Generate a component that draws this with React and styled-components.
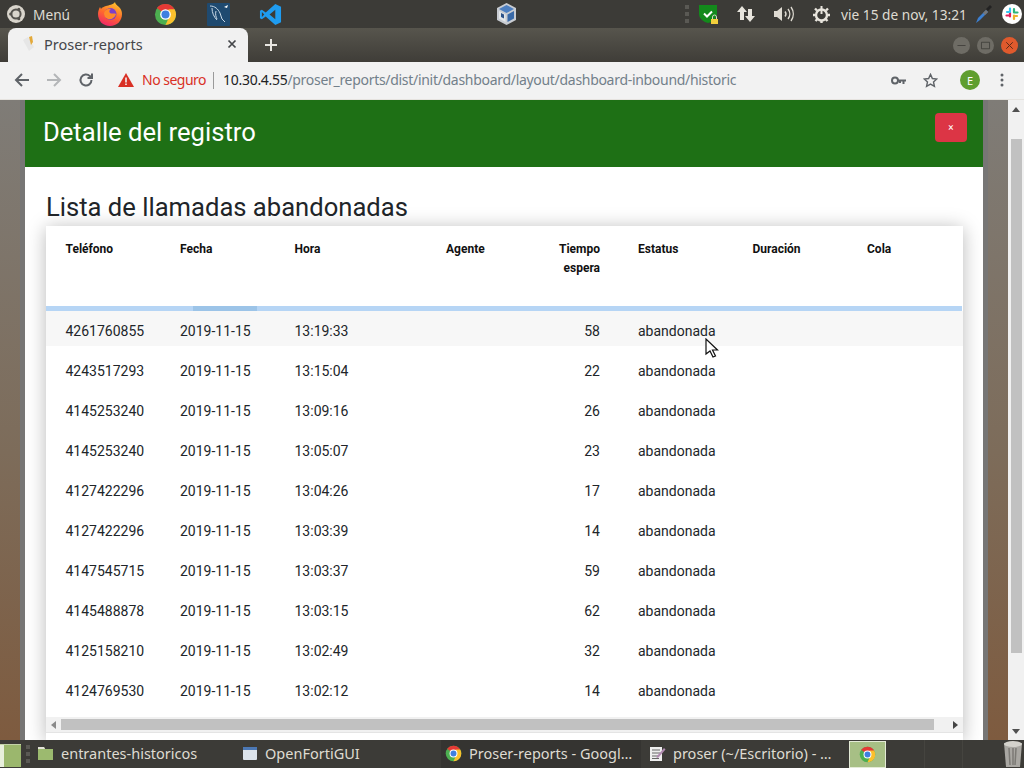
import React from "react";
import styled, { createGlobalStyle } from "styled-components";

const GlobalStyle = createGlobalStyle`
  html, body {
    margin: 0;
    padding: 0;
    overflow: hidden;
    background: #3c3b37;
  }
`;

const Screen = styled.div`
  position: relative;
  width: 1024px;
  height: 768px;
  display: flex;
  flex-direction: column;
  overflow: hidden;
  font-family: "Noto Sans", sans-serif;
`;

/* ---------- ubuntu top panel ---------- */
const TopPanel = styled.div`
  height: 28px;
  flex: none;
  display: flex;
  align-items: center;
  background: #3c3b37;
  color: #dfdbd2;
  font-size: 13.7px;
`;

const PanelSlot = styled.div`
  display: flex;
  align-items: center;
  flex: none;
  margin-left: ${(props) => props.$ml || 0}px;
`;

const PanelHandle = styled.div`
  width: 4px;
  height: 18px;
  flex: none;
  margin-left: ${(props) => props.$ml || 0}px;
  background: repeating-linear-gradient(#5a5954 0 4px, transparent 4px 7px);
`;

/* ---------- chrome tabs ---------- */
const TabStrip = styled.div`
  height: 34px;
  flex: none;
  display: flex;
  align-items: flex-end;
  padding-left: 8px;
  background: linear-gradient(#57554d, #3f3d38);
`;

const Tab = styled.div`
  width: 240px;
  height: 34px;
  box-sizing: border-box;
  display: flex;
  align-items: center;
  padding: 0 9px 2px 14px;
  background: #f1f1f1;
  border-radius: 8px 8px 0 0;
  color: #45474a;
  font-size: 14.5px;
`;

const TabTitle = styled.span`
  flex: 1;
  margin-left: 8px;
`;

const NewTab = styled.div`
  display: flex;
  margin-left: 15px;
  align-self: center;
`;

const WindowButtons = styled.div`
  display: flex;
  align-self: center;
  gap: 7px;
  margin-left: auto;
  margin-right: 6px;
`;

const WindowButton = styled.div`
  width: 17px;
  height: 17px;
  display: flex;
  align-items: center;
  justify-content: center;
  border-radius: 50%;
  background: ${(props) => (props.$close ? "#df5a2d" : "#6e6c65")};
`;

/* ---------- chrome toolbar ---------- */
const Toolbar = styled.div`
  height: 38px;
  flex: none;
  box-sizing: border-box;
  display: flex;
  align-items: center;
  padding-bottom: 1px;
  background: #f2f2f2;
  border-bottom: 1px solid #e6e3df;
`;

const ToolSlot = styled.div`
  display: flex;
  align-items: center;
  flex: none;
  margin-left: ${(props) => props.$ml || 0}px;
`;

const NotSecure = styled.span`
  margin: 0 0 2px 8px;
  color: #d93025;
  font-size: 14px;
  letter-spacing: -0.5px;
`;

const UrlDivider = styled.div`
  width: 1px;
  height: 17px;
  margin: 0 9px 0 7px;
  background: #9a9a9a;
`;

const Url = styled.div`
  width: 520px;
  flex: none;
  margin-bottom: 2px;
  color: #72808a;
  font-size: 14px;
  letter-spacing: -0.3px;
  white-space: nowrap;
  b {
    font-weight: 400;
    color: #202124;
  }
`;

const Avatar = styled.div`
  width: 20px;
  height: 20px;
  display: flex;
  align-items: center;
  justify-content: center;
  border-radius: 50%;
  background: #5f9e2f;
  color: #fff;
  font-size: 11px;
`;

/* ---------- page ---------- */
const Viewport = styled.div`
  flex: 1;
  min-height: 0;
  display: flex;
`;

const Backdrop = styled.div`
  flex: 1;
  min-width: 0;
  padding: 0 20px;
  background: linear-gradient(#7f7c77, #7d6c5a 55%, #7e5b3f);
`;

const Modal = styled.div`
  height: 100%;
  display: flex;
  flex-direction: column;
  overflow: hidden;
  background: #fff;
  border-left: 5px solid #777675;
  border-right: 5px solid #777675;
  font-family: Roboto, sans-serif;
`;

const ModalHeader = styled.div`
  height: 67px;
  flex: none;
  box-sizing: border-box;
  display: flex;
  justify-content: space-between;
  padding: 13px 16px 0 18px;
  background: #1e7015;
`;

const ModalTitle = styled.h2`
  margin: 4px 0 0;
  color: #fff;
  font-size: 25.6px;
  font-weight: 400;
  line-height: 30px;
`;

const CloseButton = styled.button`
  width: 32px;
  height: 29px;
  padding: 0;
  border: 0;
  border-radius: 4px;
  background: #dc3545;
  color: #fff;
  font-family: Roboto, sans-serif;
  font-size: 10px;
`;

const ModalBody = styled.div`
  flex: 1;
  min-height: 0;
  display: flex;
  flex-direction: column;
  padding: 25px 20px 0 21px;
`;

const SectionTitle = styled.h3`
  margin: 0;
  height: 34px;
  flex: none;
  color: #212529;
  font-size: 25.6px;
  font-weight: 400;
  line-height: 30px;
`;

const Card = styled.div`
  flex: 1;
  background: #fff;
  box-shadow: 0 2px 18px rgba(0, 0, 0, 0.28);
`;

const columns = "114.5px 114.5px 151.5px 107px 85px 114.5px 114.5px 115px";

const HeadRow = styled.div`
  height: 80px;
  box-sizing: border-box;
  display: grid;
  grid-template-columns: ${columns};
  padding-top: 14px;
  color: #111;
  font-size: 12px;
  font-weight: 700;
  line-height: 19px;
`;

const Progress = styled.div`
  height: 5px;
  margin-right: 1px;
  background: #b6d5f5;
`;

const ProgressBar = styled.div`
  width: 64px;
  height: 100%;
  margin-left: 147px;
  background: #9cc4e8;
`;

const Rows = styled.div`
  height: 406px;
`;

const Row = styled.div`
  height: 40px;
  display: grid;
  grid-template-columns: ${columns};
  align-items: center;
  color: #212529;
  font-size: 14px;
  background: ${(props) =>
    props.$hover ? "linear-gradient(#f7f7f7 35px, transparent 35px)" : "none"};
`;

const Cell = styled.div`
  padding-left: ${(props) => (props.$right ? 0 : 19.5)}px;
  padding-right: ${(props) => (props.$right ? 18.5 : 0)}px;
  text-align: ${(props) => (props.$right ? "right" : "left")};
`;

const HScroll = styled.div`
  height: 15px;
  display: flex;
  align-items: center;
  background: #f1f1f1;
  border-bottom: 1px solid #e4e4e4;
`;

const HThumb = styled.div`
  flex: 1;
  height: 11px;
  background: #c1c1c1;
`;

const HArrow = styled.div`
  width: 15px;
  flex: none;
  display: flex;
  justify-content: center;
  &::before {
    content: "";
    border-top: 4px solid transparent;
    border-bottom: 4px solid transparent;
    border-right: ${(props) => (props.$dir === "left" ? "5px solid #8a8a8a" : "0")};
    border-left: ${(props) => (props.$dir === "right" ? "5px solid #444" : "0")};
  }
`;

const HTrackEnd = styled.div`
  width: 14px;
  flex: none;
`;

const VScroll = styled.div`
  width: 16px;
  flex: none;
  display: flex;
  flex-direction: column;
  align-items: center;
  background: #f1f1f1;
`;

const VThumb = styled.div`
  width: 11px;
  height: 514px;
  margin-top: 27px;
  background: #c1c1c1;
`;

const VArrow = styled.div`
  width: 0;
  margin-top: ${(props) => (props.$dir === "up" ? 7 : 76)}px;
  border-left: 4px solid transparent;
  border-right: 4px solid transparent;
  border-bottom: ${(props) => (props.$dir === "up" ? "5px solid #505050" : "0")};
  border-top: ${(props) => (props.$dir === "down" ? "5px solid #505050" : "0")};
`;

const Pointer = styled.svg`
  position: absolute;
  left: 705px;
  top: 338px;
`;

/* ---------- bottom panel ---------- */
const TaskBar = styled.div`
  height: 28px;
  flex: none;
  display: flex;
  align-items: center;
  background: #3c3b37;
  color: #dfdbd2;
  font-size: 14.5px;
`;

const ShowDesktop = styled.div`
  width: 21px;
  height: 22px;
  flex: none;
  margin-top: 2px;
  background: linear-gradient(90deg, #e8efdc 0 4px, #9bb76d 4px);
  border-top: 1px solid #c3d3a8;
`;

const TaskItem = styled.div`
  width: ${(props) => props.$w}px;
  height: 28px;
  flex: none;
  box-sizing: border-box;
  display: flex;
  align-items: center;
  gap: ${(props) => props.$gap || 8}px;
  padding: 0 0 2px ${(props) => props.$pl || 8}px;
  background: ${(props) => (props.$active ? "#353431" : "transparent")};
  white-space: nowrap;
`;

const PinnedChrome = styled.div`
  width: 37px;
  height: 27px;
  flex: none;
  box-sizing: border-box;
  display: flex;
  align-items: center;
  justify-content: center;
  margin-left: 8px;
  background: #a7bf85;
  border: 1px solid #e3ead6;
`;

const TaskSeparator = styled.div`
  width: 1px;
  height: 28px;
  flex: none;
  margin-left: ${(props) => props.$ml}px;
  background: #45443f;
`;

const Trash = styled.div`
  display: flex;
  margin-left: auto;
`;

/* ---------- drawings ---------- */
const ChromeIcon = ({ size = 22 }) => (
  <svg width={size} height={size} viewBox="0 0 24 24">
    <circle cx="12" cy="12" r="11" fill="#4caf50" />
    <path d="M12 1a11 11 0 0 1 9.500 5.500L12 12 3 5.200A11 11 0 0 1 12 1z" fill="#e53935" />
    <path d="M21.500 6.500A11 11 0 0 1 12 23l4-9-1-7.500z" fill="#fbc02d" />
    <circle cx="12" cy="12" r="5.600" fill="#fff" />
    <circle cx="12" cy="12" r="4.200" fill="#3f7fe0" />
  </svg>
);

const UbuntuMark = () => (
  <svg width="18" height="18" viewBox="0 0 18 18">
    <circle cx="9" cy="9" r="9" fill="#d9d5cc" />
    <circle cx="9" cy="9" r="4.600" fill="none" stroke="#55534e" strokeWidth="2" />
    <circle cx="3.600" cy="9" r="1.500" fill="#55534e" />
    <circle cx="11.800" cy="4.200" r="1.500" fill="#55534e" />
    <circle cx="11.800" cy="13.800" r="1.500" fill="#55534e" />
  </svg>
);

const FirefoxIcon = () => (
  <svg width="24" height="24" viewBox="0 0 24 24">
    <defs>
      <linearGradient id="ffx" x1="0.7" y1="0" x2="0.3" y2="1">
        <stop offset="0" stopColor="#ffc52e" />
        <stop offset="0.5" stopColor="#ff6b2b" />
        <stop offset="1" stopColor="#f0246a" />
      </linearGradient>
    </defs>
    <path d="M17 0c0 2 2 3 4 5 2 2 3 4 3 7 0 7-5 12-12 12S0 19 0 12c0-3 1-5 2-7l1 2c1-2 3-2 5-3 3-1 7-1 9-4z" fill="url(#ffx)" />
    <circle cx="12.500" cy="12" r="6" fill="#7d3fc9" />
    <path d="M6 11c1-3 4-5 7-4-2 1-2 3-1 4s5 0 6 1c-1 4-5 6-8 5-3-1-4-3-4-6z" fill="#ff8a2a" />
  </svg>
);

const WorkbenchIcon = () => (
  <svg width="23" height="23" viewBox="0 0 23 23">
    <rect width="23" height="23" rx="1" fill="#1f4a70" />
    <path d="M3 3c5 0 8 3 10 7l2 6 3 3M5 5c0 5 2 9 5 12M9 8c-1 3 0 6 1 8" fill="none" stroke="#c8d8e6" strokeWidth="1" />
    <path d="M17 4l4-2-1 3z" fill="#fff" />
  </svg>
);

const VSCodeIcon = () => (
  <svg width="23" height="23" viewBox="0 0 24 24">
    <path d="M17 1l6 3v16l-6 3L7 14l-4 3-2-1.200V8.200L3 7l4 3L17 1zm0 6l-6 5 6 5V7zM3 9.500v5L5.500 12 3 9.500z" fill="#1f9cf0" />
  </svg>
);

const VirtualBoxIcon = () => (
  <svg width="21" height="24" viewBox="0 0 21 24">
    <path d="M10.500 1L20 6v12l-9.500 5L1 18V6z" fill="#c8ccd2" />
    <path d="M10.500 3L18 7l-7.500 4L3 7z" fill="#4d7fc0" />
    <path d="M3 9l6.500 3.500V20L3 16.500z" fill="#e4e7ea" />
    <path d="M18 9l-6.500 3.500V20l6.500-3.500z" fill="#3a6aa8" />
    <path d="M5 11l3 1.600v4L5 15z" fill="#2c5288" />
  </svg>
);

const ShieldIcon = () => (
  <svg width="19" height="20" viewBox="0 0 19 20">
    <path d="M0 1h18v9c0 5-5 8-9 9-4-1-9-4-9-9z" fill="#138a1c" />
    <path d="M5 9.500l3 3 5-5" fill="none" stroke="#fff" strokeWidth="2" />
    <rect x="12" y="15" width="7" height="5" fill="#f2cf3c" />
    <path d="M13.500 15v-2a2 2 0 0 1 4 0v2" fill="none" stroke="#d8d4c8" strokeWidth="1" />
  </svg>
);

const NetIcon = () => (
  <svg width="18" height="18" viewBox="0 0 18 18">
    <path d="M5 1l5 6H7v8H3V7H0z" fill="#e8e5dd" />
    <path d="M13 17l5-6h-3V4h-4v7H8z" fill="#e8e5dd" />
  </svg>
);

const SpeakerIcon = () => (
  <svg width="21" height="18" viewBox="0 0 21 18">
    <path d="M0 6h3l5-4v14l-5-4H0z" fill="#dfdbd2" />
    <g fill="none" stroke="#dfdbd2" strokeWidth="1.400">
      <path d="M11 6.500a4 4 0 0 1 0 5" />
      <path d="M14 4a8 8 0 0 1 0 10" />
      <path d="M17 2a12 12 0 0 1 0 14" />
    </g>
  </svg>
);

const GearIcon = () => (
  <svg width="17" height="17" viewBox="0 0 17 17">
    <circle cx="8.500" cy="9" r="5.500" fill="none" stroke="#e8e5dd" strokeWidth="2.400" />
    <path d="M8.500 0v8" stroke="#e8e5dd" strokeWidth="2" />
    <path d="M2 2.500l2 2M15 2.500l-2 2M0 9h2M15 9h2M2.500 15l2-2M14.500 15l-2-2M8.500 15v2" stroke="#e8e5dd" strokeWidth="2.400" />
  </svg>
);

const DropperIcon = () => (
  <svg width="18" height="20" viewBox="0 0 18 20">
    <path d="M1 19l2-5L11 6l2 2-8 8z" fill="#3c7fd0" />
    <path d="M8 9l3-3 2 2-3 3z" fill="#777" />
    <path d="M11 5l4-4 2 2-4 4z" fill="#222" />
  </svg>
);

const SlackIcon = () => (
  <svg width="20" height="20" viewBox="0 0 20 20">
    <circle cx="10" cy="10" r="10" fill="#fff" />
    <g strokeWidth="2.200" strokeLinecap="round">
      <path d="M8 8.500V12.500M4.500 11.500H8" stroke="#e01e5a" />
      <path d="M8 4.500V7.500M5 8h3" stroke="#36c5f0" />
      <path d="M12 11.500V15M12 12h3" stroke="#ecb22e" />
      <path d="M12 5v3.500M12 8.500h3.500" stroke="#2eb67d" />
    </g>
  </svg>
);

const Favicon = () => (
  <svg width="14" height="16" viewBox="0 0 14 16">
    <path d="M1 4l5-3 6 10-5 4z" fill="#e6e6e6" />
    <path d="M7 1l3-1 1 6-2 3z" fill="#e3a93a" />
  </svg>
);

const Stroke = ({ d, color = "#5f6368", size = 16, width = 2 }) => (
  <svg width={size} height={size} viewBox="0 0 16 16">
    <path d={d} fill="none" stroke={color} strokeWidth={width} />
  </svg>
);

const WarnIcon = () => (
  <svg width="16" height="14" viewBox="0 0 16 14">
    <path d="M8 0l8 14H0z" fill="#d93025" />
    <path d="M7.200 4.500h1.600v5H7.200zM7.200 10.500h1.600V12H7.200z" fill="#f2f2f2" />
  </svg>
);

const KeyIcon = () => (
  <svg width="15" height="9" viewBox="0 0 15 9">
    <circle cx="4" cy="4.500" r="3" fill="none" stroke="#5f6368" strokeWidth="2" />
    <path d="M6.500 3.500H15v2h-1.500V8h-2V5.500H10V7H8V5.500H6.500z" fill="#5f6368" />
  </svg>
);

const StarIcon = () => (
  <svg width="15" height="15" viewBox="0 0 16 16">
    <path d="M8 1.500l2 4.400 4.700.5-3.500 3.200 1 4.700L8 11.900l-4.200 2.400 1-4.700L1.300 6.400 6 5.900z" fill="none" stroke="#5f6368" strokeWidth="1.500" />
  </svg>
);

const DotsIcon = () => (
  <svg width="4" height="14" viewBox="0 0 4 14">
    <circle cx="2" cy="2" r="1.500" fill="#5f6368" />
    <circle cx="2" cy="7" r="1.500" fill="#5f6368" />
    <circle cx="2" cy="12" r="1.500" fill="#5f6368" />
  </svg>
);

const FolderIcon = () => (
  <svg width="15" height="14" viewBox="0 0 15 14">
    <path d="M0 1h6l1 2h8v11H0z" fill="#9cba6f" />
    <path d="M0 1h6l1 2H0z" fill="#e3e3d8" />
  </svg>
);

const WindowIcon = () => (
  <svg width="14" height="13" viewBox="0 0 14 13">
    <rect width="14" height="13" rx="1" fill="#dbe2ea" />
    <rect width="14" height="3" fill="#4c78b5" />
  </svg>
);

const NoteIcon = () => (
  <svg width="17" height="17" viewBox="0 0 17 17">
    <path d="M1 2h12v14H1z" fill="#eee" />
    <path d="M3 5h8M3 8h8M3 11h6M3 13.500h7" stroke="#666" strokeWidth="1" />
    <path d="M8 11l7-8 1.500 1.500-7 8-2 .5z" fill="#b08bb0" />
  </svg>
);

const TrashIcon = () => (
  <svg width="22" height="26" viewBox="0 0 22 26">
    <path d="M2 2h18l-2 24H4z" fill="#a9a7a2" />
    <ellipse cx="11" cy="3" rx="9" ry="3" fill="#d4d2cc" />
    <path d="M7 7l1 17M14 7l-1 17M11 7v17" stroke="#7c7a75" strokeWidth="1.500" />
  </svg>
);

const calls = [
  ["4261760855", "13:19:33", 58],
  ["4243517293", "13:15:04", 22],
  ["4145253240", "13:09:16", 26],
  ["4145253240", "13:05:07", 23],
  ["4127422296", "13:04:26", 17],
  ["4127422296", "13:03:39", 14],
  ["4147545715", "13:03:37", 59],
  ["4145488878", "13:03:15", 62],
  ["4125158210", "13:02:49", 32],
  ["4124769530", "13:02:12", 14],
];

const App = () => (
  <Screen>
    <GlobalStyle />
    <TopPanel>
      <PanelSlot $ml={7}>
        <UbuntuMark />
      </PanelSlot>
      <PanelSlot $ml={8}>Menú</PanelSlot>
      <PanelSlot $ml={28}>
        <FirefoxIcon />
      </PanelSlot>
      <PanelSlot $ml={32}>
        <ChromeIcon size={23} />
      </PanelSlot>
      <PanelSlot $ml={30}>
        <WorkbenchIcon />
      </PanelSlot>
      <PanelSlot $ml={29}>
        <VSCodeIcon />
      </PanelSlot>
      <PanelSlot $ml={214}>
        <VirtualBoxIcon />
      </PanelSlot>
      <PanelHandle $ml={168} />
      <PanelSlot $ml={10}>
        <ShieldIcon />
      </PanelSlot>
      <PanelSlot $ml={19}>
        <NetIcon />
      </PanelSlot>
      <PanelSlot $ml={19}>
        <SpeakerIcon />
      </PanelSlot>
      <PanelSlot $ml={18}>
        <GearIcon />
      </PanelSlot>
      <PanelSlot $ml={11}>vie 15 de nov, 13:21</PanelSlot>
      <PanelSlot $ml={8}>
        <DropperIcon />
      </PanelSlot>
      <PanelSlot $ml={9}>
        <SlackIcon />
      </PanelSlot>
    </TopPanel>

    <TabStrip>
      <Tab>
        <Favicon />
        <TabTitle>Proser-reports</TabTitle>
        <Stroke d="M4 4l8 8M12 4l-8 8" color="#45474a" size={14} />
      </Tab>
      <NewTab>
        <Stroke d="M8 2v12M2 8h12" color="#e8e6e1" />
      </NewTab>
      <WindowButtons>
        <WindowButton>
          <Stroke d="M3 8h10" color="#3c3b37" size={13} width={1} />
        </WindowButton>
        <WindowButton>
          <Stroke d="M3 4h10v8H3z" color="#3c3b37" size={13} width={1} />
        </WindowButton>
        <WindowButton $close>
          <Stroke d="M4 4l8 8M12 4l-8 8" color="#5a2a18" size={13} width={1.2} />
        </WindowButton>
      </WindowButtons>
    </TabStrip>

    <Toolbar>
      <ToolSlot $ml={14}>
        <Stroke d="M15 8H2M8 2L2 8l6 6" />
      </ToolSlot>
      <ToolSlot $ml={16}>
        <Stroke d="M1 8h13M8 2l6 6-6 6" color="#b4b6b8" />
      </ToolSlot>
      <ToolSlot $ml={16}>
        <Stroke d="M13.500 8a5.500 5.500 0 1 1-1.600-3.900L14 6M14 1.500V6H9.500" />
      </ToolSlot>
      <ToolSlot $ml={24}>
        <WarnIcon />
      </ToolSlot>
      <NotSecure>No seguro</NotSecure>
      <UrlDivider />
      <Url>
        <b>10.30.4.55</b>/proser_reports/dist/init/dashboard/layout/dashboard-inbound/historic
      </Url>
      <ToolSlot $ml={148}>
        <KeyIcon />
      </ToolSlot>
      <ToolSlot $ml={17}>
        <StarIcon />
      </ToolSlot>
      <ToolSlot $ml={22}>
        <Avatar>E</Avatar>
      </ToolSlot>
      <ToolSlot $ml={20}>
        <DotsIcon />
      </ToolSlot>
    </Toolbar>

    <Viewport>
      <Backdrop>
        <Modal>
          <ModalHeader>
            <ModalTitle>Detalle del registro</ModalTitle>
            <CloseButton>×</CloseButton>
          </ModalHeader>
          <ModalBody>
            <SectionTitle>Lista de llamadas abandonadas</SectionTitle>
            <Card>
              <HeadRow>
                <Cell>Teléfono</Cell>
                <Cell>Fecha</Cell>
                <Cell>Hora</Cell>
                <Cell>Agente</Cell>
                <Cell $right>
                  Tiempo
                  <br />
                  espera
                </Cell>
                <Cell>Estatus</Cell>
                <Cell>Duración</Cell>
                <Cell>Cola</Cell>
              </HeadRow>
              <Progress>
                <ProgressBar />
              </Progress>
              <Rows>
                {calls.map((call, index) => (
                  <Row key={index} $hover={index === 0}>
                    <Cell>{call[0]}</Cell>
                    <Cell>2019-11-15</Cell>
                    <Cell>{call[1]}</Cell>
                    <Cell />
                    <Cell $right>{call[2]}</Cell>
                    <Cell>abandonada</Cell>
                    <Cell />
                    <Cell />
                  </Row>
                ))}
              </Rows>
              <HScroll>
                <HArrow $dir="left" />
                <HThumb />
                <HTrackEnd />
                <HArrow $dir="right" />
              </HScroll>
            </Card>
          </ModalBody>
        </Modal>
      </Backdrop>
      <VScroll>
        <VArrow $dir="up" />
        <VThumb />
        <VArrow $dir="down" />
      </VScroll>
    </Viewport>

    <TaskBar>
      <ShowDesktop />
      <PanelHandle $ml={5} />
      <TaskItem $w={205}>
        <FolderIcon />
        entrantes-historicos
      </TaskItem>
      <TaskItem $w={206}>
        <WindowIcon />
        OpenFortiGUI
      </TaskItem>
      <TaskItem $w={200} $pl={4} $gap={7} $active>
        <ChromeIcon size={17} />
        Proser-reports - Googl…
      </TaskItem>
      <TaskItem $w={200} $gap={7}>
        <NoteIcon />
        proser (~/Escritorio) - …
      </TaskItem>
      <PinnedChrome>
        <ChromeIcon size={17} />
      </PinnedChrome>
      <TaskSeparator $ml={38} />
      <TaskSeparator $ml={37} />
      <Trash>
        <TrashIcon />
      </Trash>
    </TaskBar>

    <Pointer width="14" height="20" viewBox="0 0 14 20">
      <path d="M1 1v15l4-3 3 6 2.500-1-3-6h5z" fill="#fff" stroke="#111" strokeWidth="1.200" />
    </Pointer>
  </Screen>
);

export default App;
